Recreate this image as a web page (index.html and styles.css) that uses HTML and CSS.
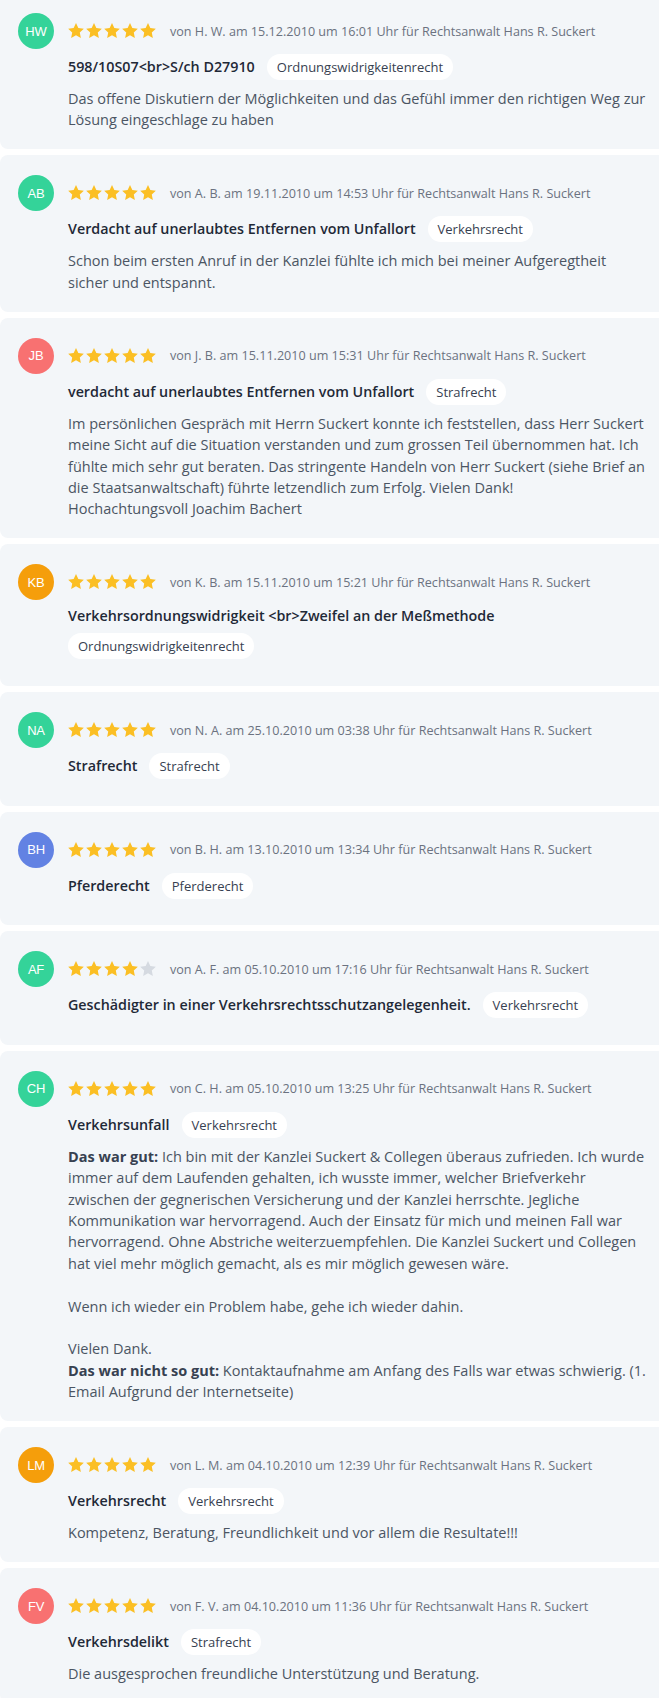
FILE: index.html
```html
<!DOCTYPE html>
<html lang="de">
<head>
<meta charset="utf-8">
<title>Bewertungen</title>
<link rel="stylesheet" href="styles.css">
</head>
<body>
<svg width="0" height="0" class="defs" aria-hidden="true">
  <defs>
    <path id="star" d="M10 1.2l2.6 5.6 6.1.7-4.5 4.2 1.2 6.1L10 14.8l-5.4 3 1.2-6.1L1.3 7.5l6.1-.7z"/>
  </defs>
</svg>
<main class="reviews">

  <article class="card">
    <div class="avatar green">HW</div>
    <div class="content">
      <div class="meta">
        <div class="stars"><svg viewBox="0 0 20 20"><use href="#star"/></svg><svg viewBox="0 0 20 20"><use href="#star"/></svg><svg viewBox="0 0 20 20"><use href="#star"/></svg><svg viewBox="0 0 20 20"><use href="#star"/></svg><svg viewBox="0 0 20 20"><use href="#star"/></svg></div>
        <span class="by">von H. W. am 15.12.2010 um 16:01 Uhr für Rechtsanwalt Hans R. Suckert</span>
      </div>
      <div class="title-row"><h3 class="title">598/10S07&lt;br&gt;S/ch D27910</h3><span class="tag">Ordnungswidrigkeitenrecht</span></div>
      <p class="text">Das offene Diskutiern der Möglichkeiten und das Gefühl immer den richtigen Weg zur Lösung eingeschlage zu haben</p>
    </div>
  </article>

  <article class="card">
    <div class="avatar green">AB</div>
    <div class="content">
      <div class="meta">
        <div class="stars"><svg viewBox="0 0 20 20"><use href="#star"/></svg><svg viewBox="0 0 20 20"><use href="#star"/></svg><svg viewBox="0 0 20 20"><use href="#star"/></svg><svg viewBox="0 0 20 20"><use href="#star"/></svg><svg viewBox="0 0 20 20"><use href="#star"/></svg></div>
        <span class="by">von A. B. am 19.11.2010 um 14:53 Uhr für Rechtsanwalt Hans R. Suckert</span>
      </div>
      <div class="title-row"><h3 class="title">Verdacht auf unerlaubtes Entfernen vom Unfallort</h3><span class="tag">Verkehrsrecht</span></div>
      <p class="text">Schon beim ersten Anruf in der Kanzlei fühlte ich mich bei meiner Aufgeregtheit sicher und entspannt.</p>
    </div>
  </article>

  <article class="card">
    <div class="avatar red">JB</div>
    <div class="content">
      <div class="meta">
        <div class="stars"><svg viewBox="0 0 20 20"><use href="#star"/></svg><svg viewBox="0 0 20 20"><use href="#star"/></svg><svg viewBox="0 0 20 20"><use href="#star"/></svg><svg viewBox="0 0 20 20"><use href="#star"/></svg><svg viewBox="0 0 20 20"><use href="#star"/></svg></div>
        <span class="by">von J. B. am 15.11.2010 um 15:31 Uhr für Rechtsanwalt Hans R. Suckert</span>
      </div>
      <div class="title-row"><h3 class="title">verdacht auf unerlaubtes Entfernen vom Unfallort</h3><span class="tag">Strafrecht</span></div>
      <p class="text">Im persönlichen Gespräch mit Herrn Suckert konnte ich feststellen, dass Herr Suckert meine Sicht auf die Situation verstanden und zum grossen Teil übernommen hat. Ich fühlte mich sehr gut beraten. Das stringente Handeln von Herr Suckert (siehe Brief an die Staatsanwaltschaft) führte letzendlich zum Erfolg. Vielen Dank!<br>Hochachtungsvoll Joachim Bachert</p>
    </div>
  </article>

  <article class="card">
    <div class="avatar orange">KB</div>
    <div class="content">
      <div class="meta">
        <div class="stars"><svg viewBox="0 0 20 20"><use href="#star"/></svg><svg viewBox="0 0 20 20"><use href="#star"/></svg><svg viewBox="0 0 20 20"><use href="#star"/></svg><svg viewBox="0 0 20 20"><use href="#star"/></svg><svg viewBox="0 0 20 20"><use href="#star"/></svg></div>
        <span class="by">von K. B. am 15.11.2010 um 15:21 Uhr für Rechtsanwalt Hans R. Suckert</span>
      </div>
      <div class="title-row"><h3 class="title">Verkehrsordnungswidrigkeit &lt;br&gt;Zweifel an der Meßmethode</h3><span class="tag">Ordnungswidrigkeitenrecht</span></div>
    </div>
  </article>

  <article class="card">
    <div class="avatar green">NA</div>
    <div class="content">
      <div class="meta">
        <div class="stars"><svg viewBox="0 0 20 20"><use href="#star"/></svg><svg viewBox="0 0 20 20"><use href="#star"/></svg><svg viewBox="0 0 20 20"><use href="#star"/></svg><svg viewBox="0 0 20 20"><use href="#star"/></svg><svg viewBox="0 0 20 20"><use href="#star"/></svg></div>
        <span class="by">von N. A. am 25.10.2010 um 03:38 Uhr für Rechtsanwalt Hans R. Suckert</span>
      </div>
      <div class="title-row"><h3 class="title">Strafrecht</h3><span class="tag">Strafrecht</span></div>
    </div>
  </article>

  <article class="card">
    <div class="avatar blue">BH</div>
    <div class="content">
      <div class="meta">
        <div class="stars"><svg viewBox="0 0 20 20"><use href="#star"/></svg><svg viewBox="0 0 20 20"><use href="#star"/></svg><svg viewBox="0 0 20 20"><use href="#star"/></svg><svg viewBox="0 0 20 20"><use href="#star"/></svg><svg viewBox="0 0 20 20"><use href="#star"/></svg></div>
        <span class="by">von B. H. am 13.10.2010 um 13:34 Uhr für Rechtsanwalt Hans R. Suckert</span>
      </div>
      <div class="title-row"><h3 class="title">Pferderecht</h3><span class="tag">Pferderecht</span></div>
    </div>
  </article>

  <article class="card">
    <div class="avatar green">AF</div>
    <div class="content">
      <div class="meta">
        <div class="stars"><svg viewBox="0 0 20 20"><use href="#star"/></svg><svg viewBox="0 0 20 20"><use href="#star"/></svg><svg viewBox="0 0 20 20"><use href="#star"/></svg><svg viewBox="0 0 20 20"><use href="#star"/></svg><svg viewBox="0 0 20 20" class="off"><use href="#star"/></svg></div>
        <span class="by">von A. F. am 05.10.2010 um 17:16 Uhr für Rechtsanwalt Hans R. Suckert</span>
      </div>
      <div class="title-row"><h3 class="title">Geschädigter in einer Verkehrsrechtsschutzangelegenheit.</h3><span class="tag">Verkehrsrecht</span></div>
    </div>
  </article>

  <article class="card">
    <div class="avatar green">CH</div>
    <div class="content">
      <div class="meta">
        <div class="stars"><svg viewBox="0 0 20 20"><use href="#star"/></svg><svg viewBox="0 0 20 20"><use href="#star"/></svg><svg viewBox="0 0 20 20"><use href="#star"/></svg><svg viewBox="0 0 20 20"><use href="#star"/></svg><svg viewBox="0 0 20 20"><use href="#star"/></svg></div>
        <span class="by">von C. H. am 05.10.2010 um 13:25 Uhr für Rechtsanwalt Hans R. Suckert</span>
      </div>
      <div class="title-row"><h3 class="title">Verkehrsunfall</h3><span class="tag">Verkehrsrecht</span></div>
      <p class="text"><strong>Das war gut:</strong> Ich bin mit der Kanzlei Suckert &amp; Collegen überaus zufrieden. Ich wurde immer auf dem Laufenden gehalten, ich wusste immer, welcher Briefverkehr zwischen der gegnerischen Versicherung und der Kanzlei herrschte. Jegliche Kommunikation war hervorragend. Auch der Einsatz für mich und meinen Fall war hervorragend. Ohne Abstriche weiterzuempfehlen. Die Kanzlei Suckert und Collegen hat viel mehr möglich gemacht, als es mir möglich gewesen wäre.<br><br>Wenn ich wieder ein Problem habe, gehe ich wieder dahin.<br><br>Vielen Dank.<br><strong>Das war nicht so gut:</strong> Kontaktaufnahme am Anfang des Falls war etwas schwierig. (1. Email Aufgrund der Internetseite)</p>
    </div>
  </article>

  <article class="card">
    <div class="avatar orange">LM</div>
    <div class="content">
      <div class="meta">
        <div class="stars"><svg viewBox="0 0 20 20"><use href="#star"/></svg><svg viewBox="0 0 20 20"><use href="#star"/></svg><svg viewBox="0 0 20 20"><use href="#star"/></svg><svg viewBox="0 0 20 20"><use href="#star"/></svg><svg viewBox="0 0 20 20"><use href="#star"/></svg></div>
        <span class="by">von L. M. am 04.10.2010 um 12:39 Uhr für Rechtsanwalt Hans R. Suckert</span>
      </div>
      <div class="title-row"><h3 class="title">Verkehrsrecht</h3><span class="tag">Verkehrsrecht</span></div>
      <p class="text">Kompetenz, Beratung, Freundlichkeit und vor allem die Resultate!!!</p>
    </div>
  </article>

  <article class="card">
    <div class="avatar red">FV</div>
    <div class="content">
      <div class="meta">
        <div class="stars"><svg viewBox="0 0 20 20"><use href="#star"/></svg><svg viewBox="0 0 20 20"><use href="#star"/></svg><svg viewBox="0 0 20 20"><use href="#star"/></svg><svg viewBox="0 0 20 20"><use href="#star"/></svg><svg viewBox="0 0 20 20"><use href="#star"/></svg></div>
        <span class="by">von F. V. am 04.10.2010 um 11:36 Uhr für Rechtsanwalt Hans R. Suckert</span>
      </div>
      <div class="title-row"><h3 class="title">Verkehrsdelikt</h3><span class="tag">Strafrecht</span></div>
      <p class="text">Die ausgesprochen freundliche Unterstützung und Beratung.</p>
    </div>
  </article>

</main>
</body>
</html>
```

FILE: styles.css
```css
html, body {
  margin: 0;
  padding: 0;
  background: #ffffff;
}

body {
  font-family: "Open Sans", "Noto Sans", sans-serif;
  color: #475467;
  overflow: hidden;
}

.defs {
  position: absolute;
  width: 0;
  height: 0;
}

.reviews {
  display: flex;
  flex-direction: column;
  gap: 6px;
  margin-top: -7px;
}

.card {
  display: grid;
  grid-template-columns: 36px 1fr;
  column-gap: 14px;
  align-items: start;
  background: #f3f6f9;
  border-radius: 8px 0 0 8px;
  padding: 20px 12px 18.6px 18px;
}

.avatar {
  width: 36px;
  height: 36px;
  border-radius: 50%;
  display: flex;
  align-items: center;
  justify-content: center;
  color: #ffffff;
  font-family: "Liberation Sans", Arial, sans-serif;
  font-size: 13px;
  letter-spacing: -0.2px;
}

.green { background: #34d399; }
.red { background: #f87171; }
.orange { background: #f59e0b; }
.blue { background: #6282e3; }

.content {
  min-width: 0;
}

.meta {
  height: 36px;
  display: flex;
  align-items: center;
  gap: 13px;
}

.stars {
  display: flex;
  gap: 0;
  margin-left: -1px;
}

.stars svg {
  width: 18px;
  height: 18px;
  fill: #fbbf24;
}

.stars svg.off {
  fill: #d5dae1;
}

.by {
  font-size: 12.6px;
  color: #6b7280;
}

.title-row {
  margin: 5px 0 8px;
  display: flex;
  flex-wrap: wrap;
  align-items: center;
  column-gap: 12px;
  row-gap: 6px;
  min-height: 26px;
}

.title {
  margin: 0;
  font-size: 14.3px;
  font-weight: 600;
  line-height: 22px;
  color: #1f2937;
}

.tag {
  height: 26px;
  display: inline-flex;
  align-items: center;
  padding: 0 10px;
  border-radius: 13px;
  background: #ffffff;
  font-size: 13px;
  color: #374151;
}

.text {
  margin: 0;
  font-size: 14.5px;
  line-height: 21.4px;
  color: #4b5563;
}

.text strong {
  font-weight: 700;
  color: #374151;
}
```
